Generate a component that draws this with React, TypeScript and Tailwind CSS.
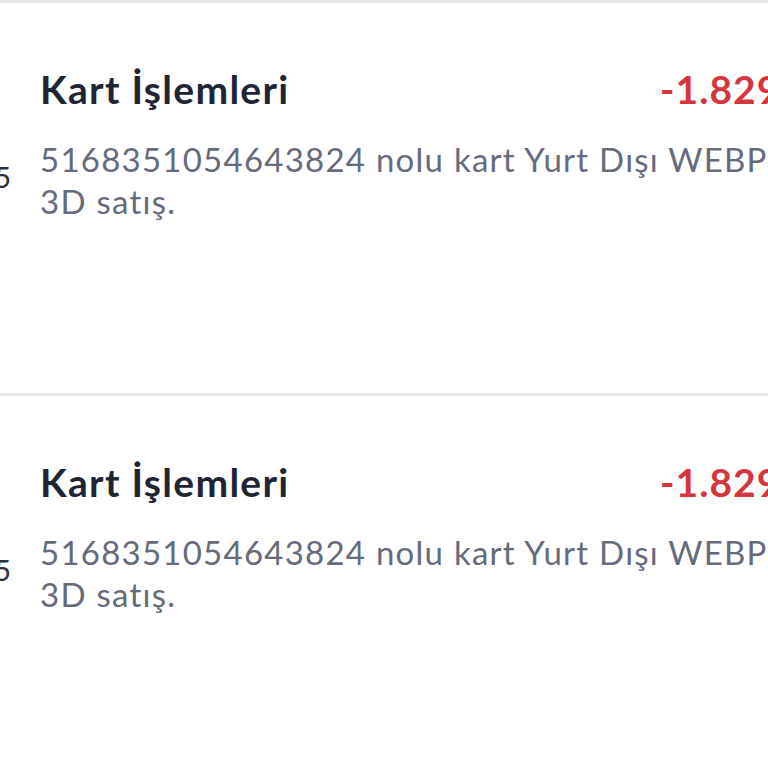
import React from "react";

function Row() {
  return (
    <div className="flex h-[393px] border-t-[3px] border-[#e5e8ec] bg-white">
      <div className="w-[40px] shrink-0 flex justify-end pr-[29px] pt-[157px]">
        <span className="whitespace-nowrap text-[29px] leading-[34px] text-[#2b2f3a]">15</span>
      </div>
      <div className="flex flex-col pt-[63px]">
        <div className="grid grid-cols-[620px_auto] items-baseline">
          <span className="whitespace-nowrap text-[39px] leading-[46px] font-bold tracking-[1.3px] text-[#1f2535]">Kart İşlemleri</span>
          <span className="whitespace-nowrap text-[39px] leading-[46px] font-bold tracking-[1px] text-[#d5363d]">-1.829,00 TL</span>
        </div>
        <div className="mt-[26px] text-[33px] leading-[42px] tracking-[1.25px] text-[#666b7c] whitespace-nowrap">
          <div>5168351054643824 nolu kart Yurt Dışı WEBPOS</div>
          <div>3D satış.</div>
        </div>
      </div>
    </div>
  );
}

export default function App() {
  return (
    <div className="w-[768px] h-[768px] overflow-hidden bg-white" style={{ fontFamily: "Lato, 'Open Sans', sans-serif" }}>
      <Row />
      <Row />
    </div>
  );
}
